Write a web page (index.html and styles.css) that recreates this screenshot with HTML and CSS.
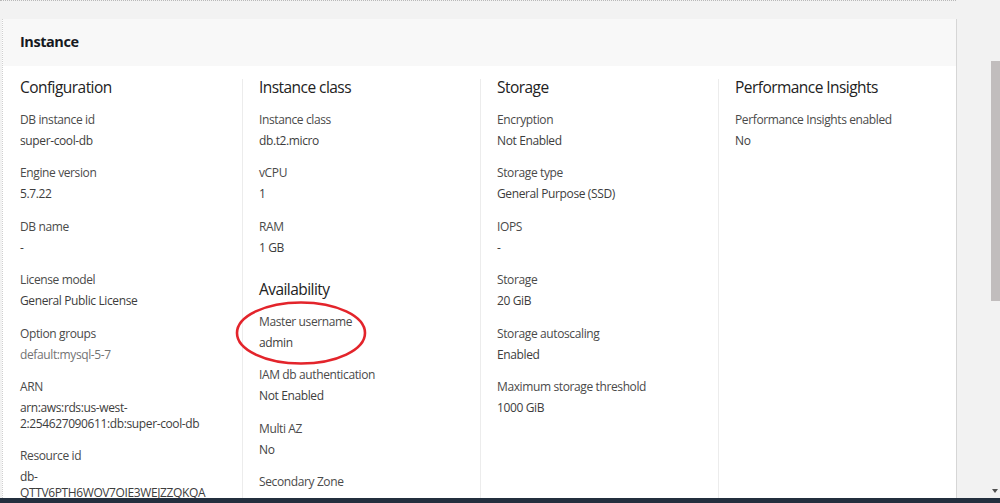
FILE: index.html
```html
<!DOCTYPE html>
<html>
<head>
<meta charset="utf-8">
<link rel="stylesheet" href="styles.css">
</head>
<body>
<div class="page">
  <div class="topline"></div>
  <div class="main">
    <div class="card">
      <div class="card-header">Instance</div>
      <div class="card-body">
        <div class="col">
          <h3>Configuration</h3>
          <div class="item"><div class="label">DB instance id</div><div class="value">super-cool-db</div></div>
          <div class="item"><div class="label">Engine version</div><div class="value">5.7.22</div></div>
          <div class="item"><div class="label">DB name</div><div class="value">-</div></div>
          <div class="item"><div class="label">License model</div><div class="value">General Public License</div></div>
          <div class="item"><div class="label">Option groups</div><div class="value muted">default:mysql-5-7</div></div>
          <div class="item"><div class="label">ARN</div><div class="value">arn:aws:rds:us-west-<br>2:254627090611:db:super-cool-db</div></div>
          <div class="item"><div class="label">Resource id</div><div class="value">db-<br>QTTV6PTH6WOV7OIE3WEJZZQKQA</div></div>
        </div>
        <div class="col">
          <h3>Instance class</h3>
          <div class="item"><div class="label">Instance class</div><div class="value">db.t2.micro</div></div>
          <div class="item"><div class="label">vCPU</div><div class="value">1</div></div>
          <div class="item"><div class="label">RAM</div><div class="value">1 GB</div></div>
          <h3 class="sub">Availability</h3>
          <div class="item circled"><div class="label">Master username</div><div class="value">admin</div>
            <svg class="ring" width="134" height="66" viewBox="0 0 134 66"><ellipse cx="67" cy="33" rx="64" ry="30.5" fill="none" stroke="#e3242b" stroke-width="2.6"/></svg>
          </div>
          <div class="item"><div class="label">IAM db authentication</div><div class="value">Not Enabled</div></div>
          <div class="item"><div class="label">Multi AZ</div><div class="value">No</div></div>
          <div class="item"><div class="label">Secondary Zone</div></div>
        </div>
        <div class="col">
          <h3>Storage</h3>
          <div class="item"><div class="label">Encryption</div><div class="value">Not Enabled</div></div>
          <div class="item"><div class="label">Storage type</div><div class="value">General Purpose (SSD)</div></div>
          <div class="item"><div class="label">IOPS</div><div class="value">-</div></div>
          <div class="item"><div class="label">Storage</div><div class="value">20 GiB</div></div>
          <div class="item"><div class="label">Storage autoscaling</div><div class="value">Enabled</div></div>
          <div class="item"><div class="label">Maximum storage threshold</div><div class="value">1000 GiB</div></div>
        </div>
        <div class="col">
          <h3>Performance Insights</h3>
          <div class="item"><div class="label">Performance Insights enabled</div><div class="value">No</div></div>
        </div>
      </div>
    </div>
    <div class="scrollbar">
      <div class="thumb"></div>
      <div class="arrow"></div>
    </div>
  </div>
  <div class="bottombar"></div>
</div>
</body>
</html>
```

FILE: styles.css
```css
* { box-sizing: border-box; }
html, body { margin: 0; padding: 0; }
body {
  width: 1000px;
  height: 503px;
  overflow: hidden;
  background: #f2f2f2;
  font-family: "Open Sans", "Noto Sans", sans-serif;
  color: #444;
}
.page {
  display: flex;
  flex-direction: column;
  height: 503px;
}
.topline {
  height: 1px;
  width: 956px;
  border-top: 1px dotted #b8b8b8;
  flex: none;
}
.main {
  flex: 1;
  display: flex;
  padding-top: 18px;
  overflow: hidden;
}
.card {
  margin-left: 2px;
  width: 955px;
  background: #fff;
  border-left: 1px dotted #d0d0d0;
  border-right: 1px solid #d6d6d6;
  display: flex;
  flex-direction: column;
  overflow: hidden;
}
.card-header {
  height: 47px;
  background: #f8f8f8;
  padding: 0 0 3px 17px;
  display: flex;
  align-items: center;
  font-size: 14.5px;
  letter-spacing: -0.45px;
  font-weight: 700;
  color: #16191f;
  flex: none;
}
.card-body {
  display: grid;
  grid-template-columns: 222px 238px 238px 1fr;
  padding: 13px 0 0 17px;
  align-items: start;
}
.col {
  padding-left: 16px;
  border-left: 1px solid #ececec;
  min-height: 440px;
}
.col:first-child {
  padding-left: 0;
  border-left: none;
}
h3 {
  margin: 0 0 16px;
  font-size: 15.5px;
  letter-spacing: -0.55px;
  font-weight: 400;
  line-height: 17px;
  color: #222;
}
h3.sub {
  margin-top: 25px;
}
.item {
  margin-bottom: 16.4px;
  font-size: 12px;
  letter-spacing: -0.38px;
  line-height: 16px;
}
.label { color: #4a4a4a; margin-bottom: 5px; }
.value { color: #3d3d3d; }
.value.muted { color: #737373; }
.circled { position: relative; }
.ring {
  position: absolute;
  left: -25px;
  top: -14px;
}
.scrollbar {
  flex: 1;
  position: relative;
  display: flex;
  justify-content: flex-end;
}
.thumb {
  margin-top: 42px;
  width: 9px;
  height: 240px;
  background: #c1bdbd;
}
.arrow {
  position: absolute;
  right: 2px;
  bottom: 5px;
  width: 0; height: 0;
  border-left: 3px solid transparent;
  border-right: 3px solid transparent;
  border-top: 4px solid #505050;
}
.bottombar {
  height: 5px;
  background: #232f3e;
  flex: none;
}
```
